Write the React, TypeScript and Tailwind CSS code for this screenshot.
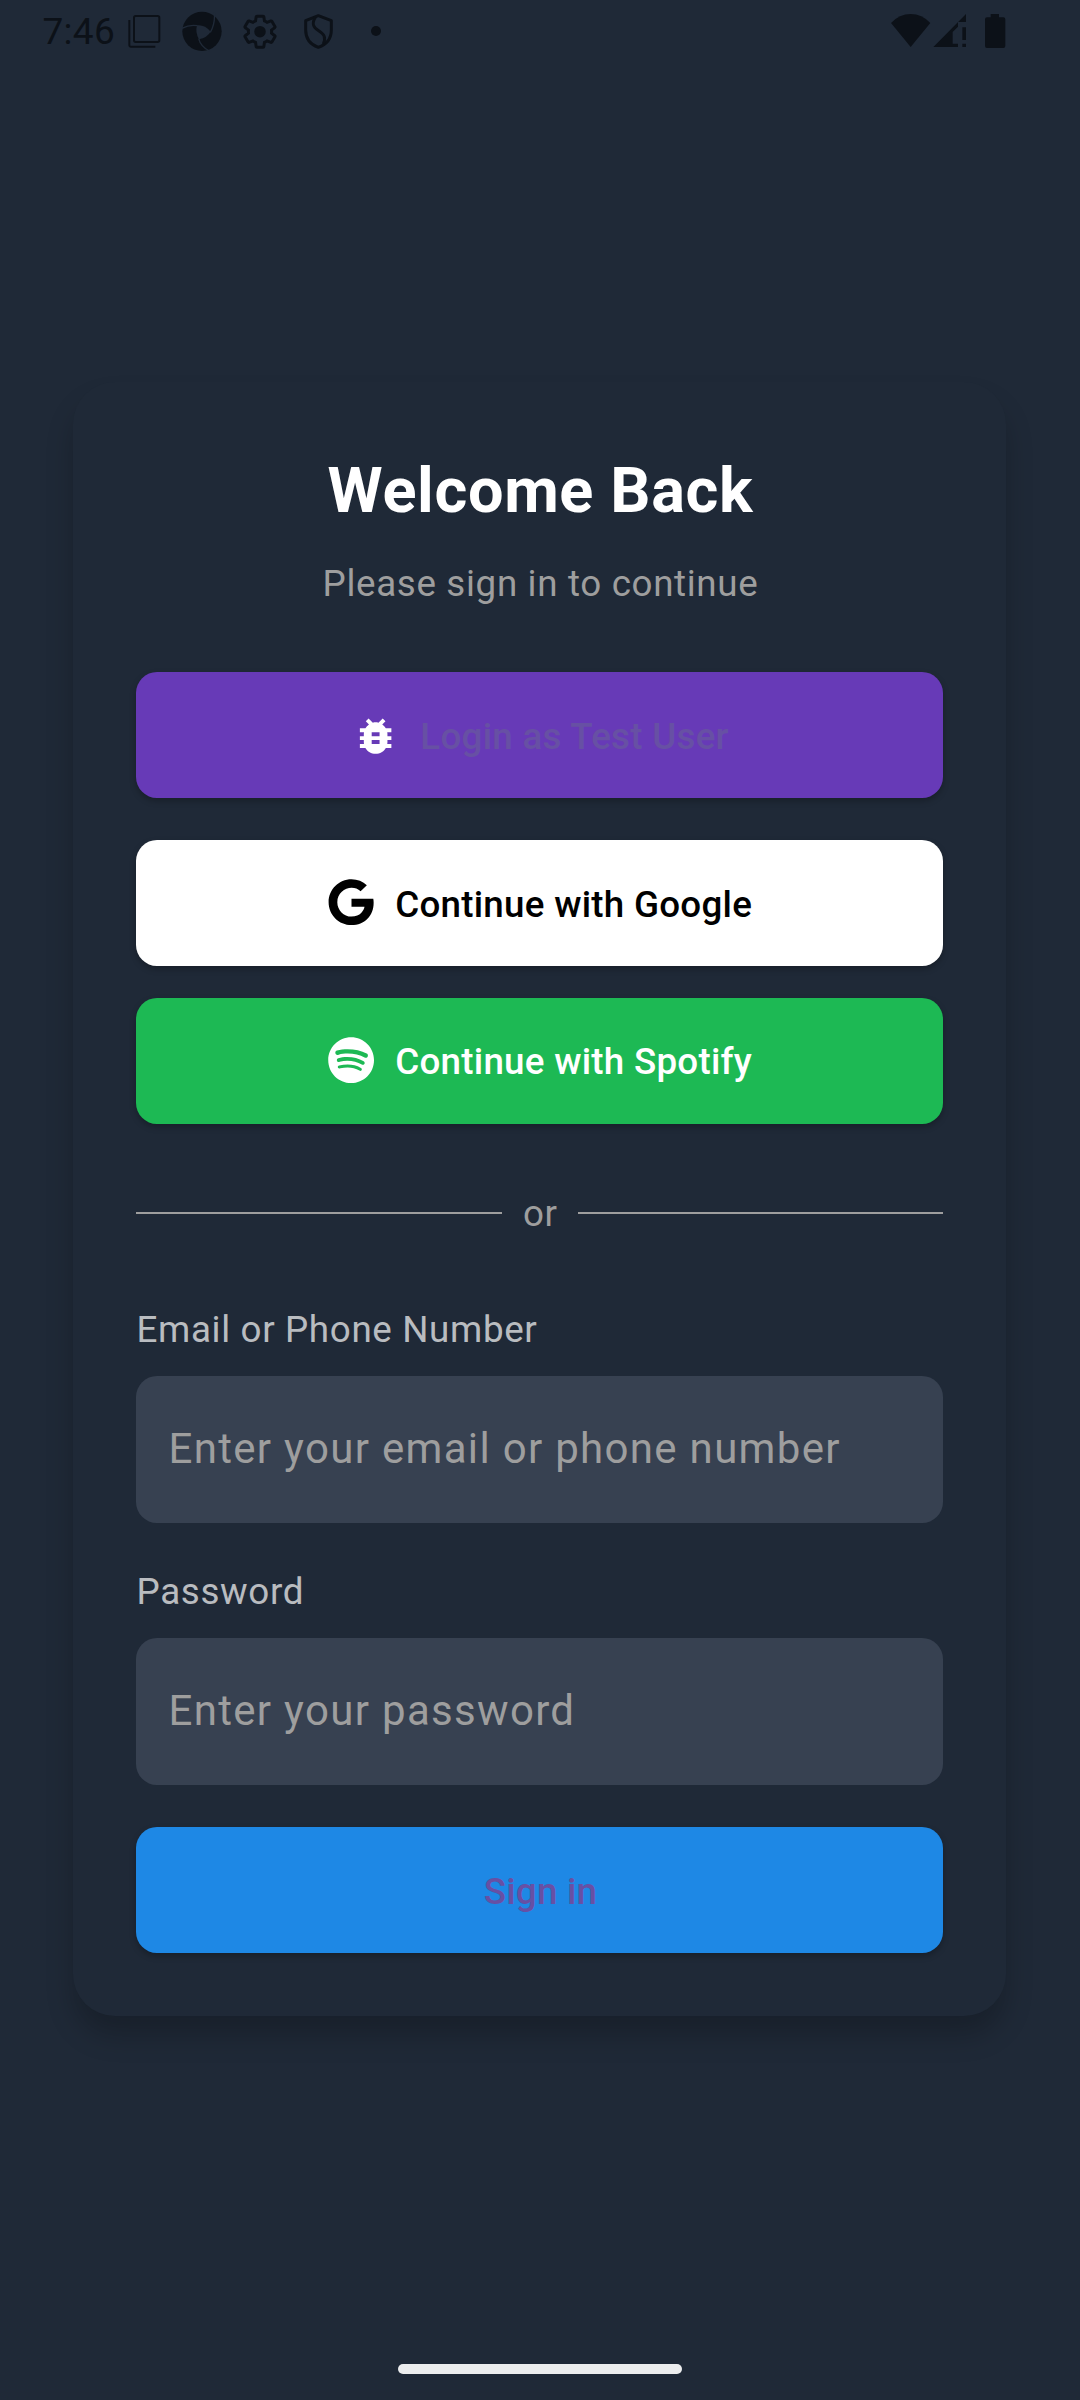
import type { ReactNode } from "react";
import { FaGoogle, FaSpotify } from "react-icons/fa";
import { MdBugReport } from "react-icons/md";

const GEAR =
  "M19.43 12.98c.04-.32.07-.64.07-.98 0-.34-.03-.66-.07-.98l2.11-1.65c.19-.15.24-.42.12-.64l-2-3.46c-.09-.16-.26-.25-.44-.25-.06 0-.12.01-.17.03l-2.49 1c-.52-.4-1.08-.73-1.69-.98l-.38-2.65C14.46 2.18 14.25 2 14 2h-4c-.25 0-.46.18-.49.42l-.38 2.65c-.61.25-1.17.59-1.69.98l-2.49-1c-.06-.02-.12-.03-.18-.03-.17 0-.34.09-.43.25l-2 3.46c-.13.22-.07.49.12.64l2.11 1.65c-.04.32-.07.65-.07.98 0 .33.03.66.07.98l-2.11 1.65c-.19.15-.24.42-.12.64l2 3.46c.09.16.26.25.44.25.06 0 .12-.01.17-.03l2.49-1c.52.4 1.08.73 1.69.98l.38 2.65c.03.24.24.42.49.42h4c.25 0 .46-.18.49-.42l.38-2.65c.61-.25 1.17-.59 1.69-.98l2.49 1c.06.02.12.03.18.03.17 0 .34-.09.43-.25l2-3.46c.12-.22.07-.49-.12-.64l-2.11-1.65z";

function StatusBar() {
  return (
    <header className="flex h-[62px] items-start justify-between pl-[42.5px] pr-[73px] pt-[10px] text-[#0c1118]">
      <div className="flex">
        <span className="w-[85.5px] pt-px text-[37px] leading-[42px] tracking-[0.3px]">7:46</span>
        <svg className="h-[42px] w-[34px]" viewBox="294 30 102 126" fill="none" stroke="currentColor" strokeWidth="6">
          <rect x="312" y="48" width="76" height="78" rx="5" />
          <path d="M298 60v76q0 4 4 4h74" />
        </svg>
        <svg className="ml-5 h-[42px] w-10" viewBox="456 30 120 126">
          <circle cx="516" cy="94" r="59" fill="currentColor" />
          <path d="M501 76Q524 73 542 95Q532 112 507 118Q495 98 501 76Z" fill="#1f2937" />
          <path
            d="M456 85Q478 73 502 77M553 38Q556 70 541 97M506 116Q512 140 538 153"
            fill="none"
            stroke="#1f2937"
            strokeWidth="4"
          />
        </svg>
        <svg className="ml-5 h-[42px] w-9" viewBox="636 30 108 126">
          <g transform="translate(690 95) scale(4.65) translate(-12 -12)">
            <path d={GEAR} fill="none" stroke="currentColor" strokeWidth="1.9" />
            <circle cx="12" cy="12" r="3.7" fill="currentColor" />
          </g>
        </svg>
        <svg className="ml-6 h-[42px] w-8" viewBox="816 30 96 126" fill="none" stroke="currentColor" strokeWidth="9">
          <path d="M865 47L904 62V90C904 116 888 134 865 142C842 134 827 116 827 90V62Z" strokeLinejoin="round" />
          <path d="M856 52C844 72 850 82 864 91C884 104 888 112 880 132" />
        </svg>
        <svg className="ml-9 h-[42px] w-3" viewBox="1020 30 36 126">
          <circle cx="1038" cy="93" r="15" fill="currentColor" />
        </svg>
      </div>
      <div className="flex">
        <svg className="h-[42px] w-[41px]" viewBox="60 30 123 126" fill="currentColor">
          <path d="M122 141L63 69Q88 42 122 42T181 69Z" />
        </svg>
        <svg className="h-[42px] w-9" viewBox="183 30 108 126" fill="currentColor">
          <path d="M190 141L288 42V66H264V80L248 96V131H264V141ZM277 82h11v38h-11zM277 131h11v10h-11z" />
        </svg>
        <svg className="ml-4 h-[42px] w-6" viewBox="339 30 72 126" fill="currentColor">
          <path d="M362 42h25v10h13q6 0 6 6v80q0 6-6 6h-49q-6 0-6-6V58q0-6 6-6h11z" />
        </svg>
      </div>
    </header>
  );
}

function ActionButton({ className, icon, children }: { className: string; icon?: ReactNode; children: ReactNode }) {
  return (
    <button
      className={
        "flex h-[126px] w-full items-center justify-center gap-[21px] rounded-[21px] text-[36.75px] font-medium leading-[52px] tracking-[0.2625px] shadow-[0_3px_6px_rgba(0,0,0,0.25)] " +
        className
      }
    >
      {icon}
      <span>{children}</span>
    </button>
  );
}

function Field({ label, placeholder, type }: { label: string; placeholder: string; type: string }) {
  return (
    <label className="flex flex-col gap-[21px]">
      <span className="h-[53px] pl-[0.5px] pt-px text-[36.75px] leading-[53px] tracking-[0.65625px] text-white/70">
        {label}
      </span>
      <input
        type={type}
        placeholder={placeholder}
        className="h-[147px] w-full rounded-[21px] bg-[#374151] px-[32.5px] pb-[2px] text-[42px] tracking-[1.3125px] text-white outline-none placeholder:text-[#9e9e9e] placeholder:opacity-100"
      />
    </label>
  );
}

export default function App() {
  return (
    <div className="flex h-[2400px] w-[1080px] flex-col bg-[#1f2937] font-['Roboto',sans-serif]">
      <StatusBar />
      <main className="ml-[73px] mr-[74px] mt-[320px] flex h-[1634px] flex-col rounded-[42px] bg-[#1f2937] px-[63px] pt-[64px] shadow-[0_20px_28px_-1px_rgba(0,0,0,0.22)]">
        <h1 className="pl-[2px] text-center text-[63px] font-bold leading-[90px] tracking-[0.65625px] text-white">
          Welcome Back
        </h1>
        <p className="mt-[21px] pl-[2px] text-center text-[36.75px] leading-[53px] tracking-[0.65625px] text-[#9e9e9e]">
          Please sign in to continue
        </p>
        <div className="mt-[62px] flex flex-col">
          <ActionButton
            className="bg-[#673ab7] pl-[2px] pt-[3px] text-[#6750a4]"
            icon={<MdBugReport className="size-[47.25px] -translate-y-[0.5px] text-white" />}
          >
            Login as Test User
          </ActionButton>
          <ActionButton
            className="mt-[42px] bg-white pt-[3px] text-black"
            icon={<FaGoogle className="size-[47.25px] translate-x-[0.5px] -translate-y-[2.5px]" />}
          >
            Continue with Google
          </ActionButton>
          <ActionButton
            className="mt-[32px] bg-[#1db954] pt-[2px] text-white"
            icon={<FaSpotify className="size-[47.25px] translate-x-[0.5px] -translate-y-[1.5px]" />}
          >
            Continue with Spotify
          </ActionButton>
        </div>
        <div className="mt-[63px] flex h-[52px] items-center gap-[21px] text-[36.75px] leading-[52px] tracking-[0.65625px] text-[#9e9e9e]">
          <span className="h-[2px] w-[366px] bg-[#9e9e9e]" />
          <span className="w-[34px] pt-[2px]">or</span>
          <span className="h-[2px] flex-1 bg-[#9e9e9e]" />
        </div>
        <form className="mt-[63px] flex flex-col">
          <Field label="Email or Phone Number" placeholder="Enter your email or phone number" type="text" />
          <div className="mt-[41px]">
            <Field label="Password" placeholder="Enter your password" type="password" />
          </div>
          <ActionButton className="mt-[42px] bg-[#1e88e5] pl-[2px] pt-[3px] text-[#6750a4]">Sign in</ActionButton>
        </form>
      </main>
      <div className="mx-auto mt-[348px] h-[10px] w-[284px] rounded-full bg-[#ecedee]" />
    </div>
  );
}
